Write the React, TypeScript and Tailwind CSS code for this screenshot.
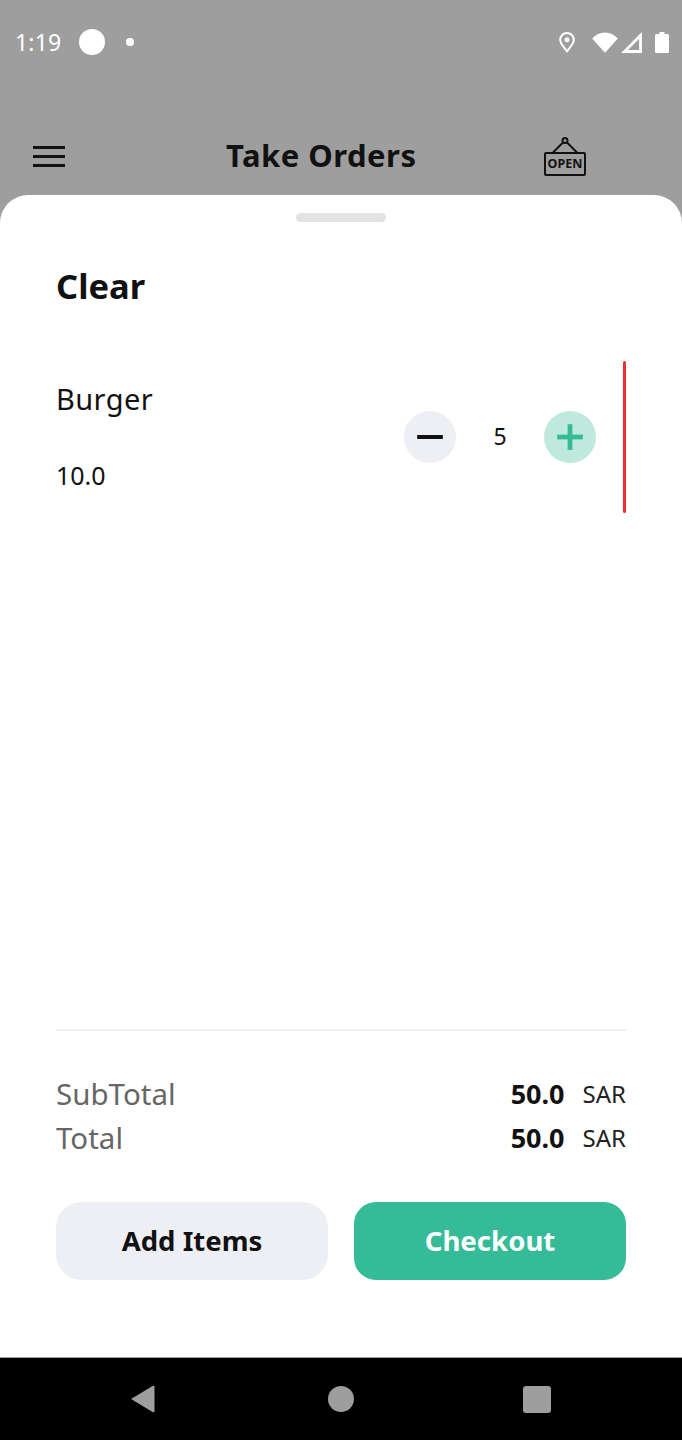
import React from 'react';
import { Minus, Plus } from 'lucide-react';

// Barra de estado de Android
const StatusBar = () => (
  <div className="flex h-[84px] items-center justify-between pl-[15px] pr-[13px] text-white">
    <div className="flex items-center">
      <span className="text-[23px] leading-none font-normal tracking-[0.2px]">1:19</span>
      <span className="ml-[18px] h-[26px] w-[26px] rounded-full bg-white" />
      <span className="ml-[21px] h-[8px] w-[8px] rounded-full bg-white" />
    </div>
    <div className="flex items-center">
      <svg width="16" height="21" viewBox="0 0 16 21" fill="none">
        <path d="M8 19.500C5.500 15.500 1.200 12 1.200 7.800a6.800 6.800 0 0 1 13.600 0C14.800 12 10.500 15.500 8 19.500z" stroke="white" strokeWidth="2" strokeLinejoin="round" />
        <circle cx="8" cy="7.800" r="2.500" fill="white" />
      </svg>
      <svg className="ml-[17px]" width="26" height="21" viewBox="0 0 26 21">
        <path d="M13 20.800 0.200 6.500C3.700 2.800 8 0.500 13 0.500s9.300 2.300 12.800 6z" fill="white" />
      </svg>
      <svg className="ml-[3px]" width="21" height="21" viewBox="0 0 21 21" fill="none">
        <path d="M19.500 3.500V19.500H3.500z" stroke="white" strokeWidth="2.800" />
      </svg>
      <svg className="ml-[13px]" width="14" height="21" viewBox="0 0 14 21">
        <path d="M4.500 0h5v2H12.500a1.500 1.500 0 0 1 1.500 1.500V19.500a1.500 1.500 0 0 1-1.500 1.500H1.500A1.500 1.500 0 0 1 0 19.500V3.500A1.500 1.500 0 0 1 1.500 2H4.500z" fill="white" />
      </svg>
    </div>
  </div>
);

const OpenSign = () => (
  <div className="relative h-[40px] w-[42px]">
    <svg className="absolute inset-0" width="42" height="40" viewBox="0 0 42 40" fill="none" stroke="#111" strokeWidth="2">
      <circle cx="21" cy="3.500" r="2.500" />
      <path d="M19 5.500 8 16.500M23 5.500l11 11" />
      <rect x="1" y="16" width="40" height="22" rx="1" />
    </svg>
    <span className="absolute inset-x-0 top-[17px] text-center text-[12.500px] leading-[20px] font-bold text-[#111]">OPEN</span>
  </div>
);

const Header = () => (
  <div className="flex h-[111px] items-start pt-[49px] pl-[33px]">
    <div className="mt-[13px] flex w-[32px] flex-col gap-[6px]">
      <span className="h-[3px] bg-[#111]" />
      <span className="h-[3px] bg-[#111]" />
      <span className="h-[3px] bg-[#111]" />
    </div>
    <h1 className="ml-[161px] w-[191px] text-[31px] leading-[44px] font-bold tracking-[0.5px] whitespace-nowrap text-[#111]">Take Orders</h1>
    <div className="mt-[4px] ml-[127px]">
      <OpenSign />
    </div>
  </div>
);

const Stepper = () => (
  <div className="flex items-center">
    <button className="flex h-[52px] w-[52px] items-center justify-center rounded-full bg-[#eeeff4]">
      <Minus size={44} strokeWidth={2.200} color="#111" strokeLinecap="butt" />
    </button>
    <span className="w-[88px] pb-[2px] text-center text-[23px] leading-[30px] text-[#111]">5</span>
    <button className="flex h-[52px] w-[52px] items-center justify-center rounded-full bg-[#bfe9dd]">
      <Plus size={44} strokeWidth={2.600} color="#35bb98" strokeLinecap="butt" />
    </button>
  </div>
);

const TotalRow = ({ label, value }: { label: string; value: string }) => (
  <div className="flex h-[44px] items-center justify-between">
    <span className="text-[29.500px] leading-[44px] text-[#666]">{label}</span>
    <div className="flex items-center">
      <span className="text-[27px] leading-[44px] font-bold text-[#111]">{value}</span>
      <span className="ml-[18px] text-[24px] leading-[44px] text-[#222]">SAR</span>
    </div>
  </div>
);

export default function App() {
  return (
    <div className="flex h-[1440px] w-[682px] flex-col overflow-hidden bg-[#9e9e9e] font-['Noto_Sans',sans-serif]">
      <StatusBar />
      <Header />

      {/* Hoja inferior */}
      <div className="flex flex-1 flex-col rounded-t-[28px] bg-white px-[56px]">
        <div className="mt-[18px] h-[9px] w-[90px] self-center rounded-full bg-[#e3e3e3]" />
        <h2 className="mt-[42px] text-[34.500px] leading-[44px] font-bold text-[#111]">Clear</h2>

        <div className="mt-[53px] flex h-[152px] items-center justify-between">
          <div className="flex flex-col pb-[2px]">
            <span className="text-[29px] leading-[38px] tracking-[0.4px] text-[#111]">Burger</span>
            <span className="mt-[40px] text-[25px] leading-[34px] text-[#111]">10.0</span>
          </div>
          <div className="flex items-center">
            <Stepper />
            <span className="ml-[27px] h-[152px] w-[3px] rounded-full bg-[#ec2f36]" />
          </div>
        </div>

        {/* Totales */}
        <div className="mt-auto border-t-2 border-[#eeeff4] pt-[41px]">
          <TotalRow label="SubTotal" value="50.0" />
          <TotalRow label="Total" value="50.0" />
          <div className="mt-[42px] mb-[77px] flex gap-[26px]">
            <button className="h-[78px] w-[272px] rounded-[26px] bg-[#eeeff4] text-[27.500px] font-bold text-[#111]">Add Items</button>
            <button className="h-[78px] w-[272px] rounded-[22px] bg-[#35bb98] text-[27.600px] font-bold text-white">Checkout</button>
          </div>
        </div>
      </div>

      {/* Navegación */}
      <div className="flex h-[83px] items-center border-t border-[#9e9e9e] bg-black pl-[130px]">
        <svg width="25" height="28" viewBox="0 0 25 28" fill="#9e9e9e">
          <path d="M1 14 23 0.800a1 1 0 0 1 1.500 1V26.200a1 1 0 0 1-1.500 1z" />
        </svg>
        <span className="ml-[173px] h-[26px] w-[26px] rounded-full bg-[#9e9e9e]" />
        <span className="ml-[169px] h-[27px] w-[28px] rounded-[3px] bg-[#9e9e9e]" />
      </div>
    </div>
  );
}
